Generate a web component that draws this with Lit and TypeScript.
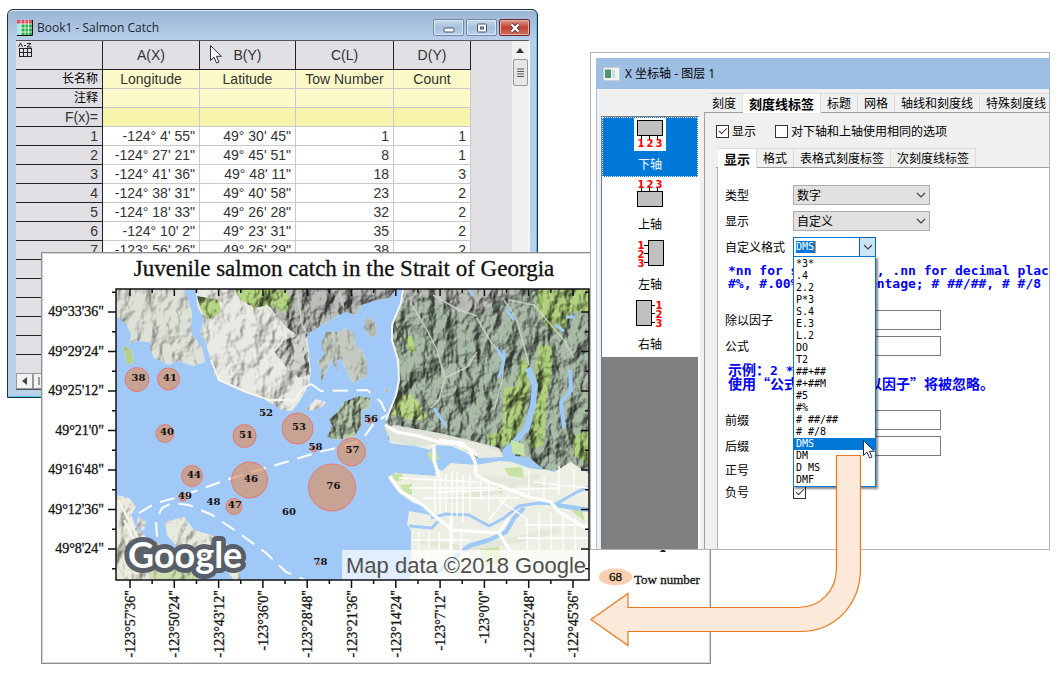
import { LitElement, html, svg, css } from "lit";
import { customElement, state } from "lit/decorators.js";
import { classMap } from "lit/directives/class-map.js";

const CJK = css`"Noto Sans CJK SC", sans-serif`;

const pointer = (x: number, y: number) => svg`
  <path transform="translate(${x} ${y})" d="M.5 .5V15.5L4 12.2L6.6 18L9 17L6.4 11.3H11.4Z"
    fill="#fff" stroke="#2a2e48" stroke-width="1"></path>`;

/* ---------- worksheet ---------- */

const ROWS = [
  ["-124° 4' 55\"", "49° 30' 45\"", "1", "1"],
  ["-124° 27' 21\"", "49° 45' 51\"", "8", "1"],
  ["-124° 41' 36\"", "49° 48' 11\"", "18", "3"],
  ["-124° 38' 31\"", "49° 40' 58\"", "23", "2"],
  ["-124° 18' 33\"", "49° 26' 28\"", "32", "2"],
  ["-124° 10' 2\"", "49° 23' 31\"", "35", "2"],
  ["-123° 56' 26\"", "49° 26' 29\"", "38", "2"],
];

@customElement("sheet-window")
class SheetWindow extends LitElement {
  static styles = css`
    :host { display: flex; flex-direction: column; box-sizing: border-box; height: 389px;
      border: 1px solid #25323c; border-radius: 6px 6px 0 0; overflow: hidden;
      padding: 0 7px 7px 8px; font: 14px/18px "Liberation Sans", ${CJK}; color: #333;
      background: linear-gradient(#9ab5d3, #b7cfe9 30px, #b9d1ea);
      box-shadow: inset -1px 0 #49c4ec, inset 0 -1px #49c4ec, inset 0 1px #dce9f5; }
    .title { display: flex; align-items: center; gap: 4px; height: 30px; flex: none; }
    .title h2 { flex: 1; margin: 0; padding-top: 5px; font: 12px/16px "Open Sans", sans-serif; color: #1b2733; }
    .title button { width: 31px; height: 17px; margin: 5px 0 0 -2px; padding: 0; border: 1px solid #6f88a5;
      border-radius: 2px; background: linear-gradient(#c9dbee, #a4c0de 50%, #b9d2ea);
      box-shadow: inset 0 0 0 1px #dbe8f5; display: grid; place-items: center; }
    .title .close { background: linear-gradient(#dc9b8f, #bf4330 50%, #d2705c); border-color: #6b2a2a; box-shadow: inset 0 0 0 1px #e6b0a6; }
    .title .icon { margin-top: 4px; }
    .title .min { padding-top: 4px; }
    .body { display: flex; flex: 1; min-height: 0; overflow: hidden; background: #e0dfe4;
      border-top: 1px solid #555; border-right: 2px solid #f6f6f6; }
    .grid { flex: 1; display: flex; flex-direction: column; overflow: hidden; }
    .cells { flex: 1; min-height: 0; overflow: hidden; }
    table { border-collapse: separate; border-spacing: 0; table-layout: fixed; width: 455px; }
    th, td { box-sizing: border-box; height: 19px; padding: 0; overflow: hidden; white-space: nowrap;
      font-weight: 400; line-height: 18px; border-right: 1px solid #c9c9cf; border-bottom: 1px solid #c9c9cf; }
    thead th { height: 29px; background: #e0dfe4; border-color: #222; }
    .corner { text-align: left; vertical-align: top; }
    .corner svg { display: block; margin: 1px 0 0 2px; }
    .side { background: #e0dfe4; text-align: right; padding-right: 4px; border-color: #222; }
    .side.cn { font-size: 12px; color: #000; }
    .note { background: #fbfac8; text-align: center; }
    td { background: #fff; text-align: right; padding-right: 4px; }
    td.note, td.formula { padding: 0; }
    td.note { background: #fbfac8; text-align: center; }
    td.formula { background: #f7f5ab; }
    .vbar { width: 16px; flex: none; background: #f0f0f2; display: flex; flex-direction: column; align-items: center; }
    .vbar button, .hbar button { border: 0; padding: 0; background: none; display: grid; place-items: center; }
    .vbar button { width: 16px; height: 18px; }
    .thumb { width: 13px; height: 25px; border: 1px solid #979797; border-radius: 2px; background: #e6e6e8; display: grid; place-items: center; }
    .hbar { height: 16px; flex: none; display: flex; border-bottom: 1px solid #555; background: #f0f0f2; }
    .hbar button { width: 17px; border: 1px solid #999; background: #f2f2f2; }
  `;
  render() {
    return html`
      <div class="title">
        <svg class="icon" width="17" height="17">
          <rect x="1" y="1" width="15" height="15" fill="#fff"></rect>
          <rect x="1" y="1" width="15" height="4" fill="#f0455a"></rect>
          <rect x="1" y="5" width="4" height="11" fill="#9fe3ee"></rect>
          <rect x="5" y="5" width="11" height="11" fill="#27b04c"></rect>
          <path d="M1 5H16M1 9H16M1 13H16M5 1V16M9 1V16M12.500 1V16" stroke="#d9f3dd"></path>
          <path d="M1 16.500H16.500V1" fill="none" stroke="#111"></path>
        </svg>
        <h2>Book1 - Salmon Catch</h2>
        <button class="min" aria-label="最小化"><svg width="12" height="6"><rect x="1" y="1" width="10" height="4" rx="1" fill="#fff" stroke="#4a5568"></rect></svg></button>
        <button aria-label="最大化"><svg width="12" height="10"><rect x="1.500" y="1" width="9" height="8" rx="1" fill="#fff" stroke="#4a5568"></rect><rect x="4.500" y="4" width="3" height="2" fill="#a9c3de" stroke="#4a5568"></rect></svg></button>
        <button class="close" aria-label="关闭"><svg width="12" height="10"><path d="M2.500 1.500L9.500 8.500M9.500 1.500L2.500 8.500" stroke="#4b3338" stroke-width="4"></path><path d="M2.500 1.500L9.500 8.500M9.500 1.500L2.500 8.500" stroke="#fff" stroke-width="2.400"></path></svg></button>
      </div>
      <div class="body">
        <div class="grid">
          <div class="cells">
            <table>
              <colgroup><col style="width:87px"><col style="width:97px"><col style="width:96px"><col style="width:98px"><col style="width:77px"></colgroup>
              <thead><tr>
                <th class="corner"><svg width="15" height="16" fill="none" stroke="#222"><path d="M.5 5L2.500 1L4.500 5M6 3.500H8M9 1.500H13L9 5H13.500"></path><rect x="1.500" y="6.500" width="12" height="8"></rect><path d="M1 10.500H14M5.500 6V15M9.500 6V15"></path></svg></th>
                <th>A(X)</th><th>B(Y)</th><th>C(L)</th><th>D(Y)</th>
              </tr></thead>
              <tbody>
                <tr><th class="side cn">长名称</th>${["Longitude", "Latitude", "Tow Number", "Count"].map((n) => html`<td class="note">${n}</td>`)}</tr>
                <tr><th class="side cn">注释</th>${[0, 1, 2, 3].map(() => html`<td class="note"></td>`)}</tr>
                <tr><th class="side">F(x)=</th>${[0, 1, 2, 3].map(() => html`<td class="formula"></td>`)}</tr>
                ${ROWS.map((r, i) => html`<tr><th class="side">${i + 1}</th>${r.map((c) => html`<td>${c}</td>`)}</tr>`)}
                ${[0, 1, 2, 3, 4, 5].map(() => html`<tr><th class="side"></th><td></td><td></td><td></td><td></td></tr>`)}
              </tbody>
            </table>
          </div>
          <div class="hbar">
            <button aria-label="向左滚动"><svg width="6" height="8"><path d="M5 0V8L0 4Z" fill="#444"></path></svg></button>
            <button aria-label="第一张"><svg width="8" height="8"><path d="M1 0V8M7 0V8L3 4Z" fill="#444" stroke="#444"></path></svg></button>
          </div>
        </div>
        <div class="vbar">
          <button aria-label="向上滚动"><svg width="8" height="5"><path d="M0 5H8L4 0Z" fill="#333"></path></svg></button>
          <div class="thumb"><svg width="7" height="9"><path d="M0 1H7M0 3.500H7M0 6H7M0 8.500H7" stroke="#555"></path></svg></div>
        </div>
      </div>`;
  }
}

/* ---------- map graph ---------- */

const LAT = ["49°33'36\"", "49°29'24\"", "49°25'12\"", "49°21'0\"", "49°16'48\"", "49°12'36\"", "49°8'24\""];
const LON = ["-123°57'36\"", "-123°50'24\"", "-123°43'12\"", "-123°36'0\"", "-123°28'48\"", "-123°21'36\"",
  "-123°14'24\"", "-123°7'12\"", "-123°0'0\"", "-122°52'48\"", "-122°45'36\""];
const latY = (i: number) => 312 + i * 39.5;
const lonX = (i: number) => 131 + i * 44.3;

// tow number, label centre, bubble centre, bubble radius
const TOWS: [string, number, number, number, number, number][] = [
  ["38", 139.5, 377, 138, 379.5, 12], ["41", 171, 377, 169.5, 379, 11], ["40", 168, 431, 166, 433.5, 9],
  ["51", 247, 434, 245.5, 436, 11.5], ["53", 300, 426, 298.5, 428.5, 15.5], ["52", 267, 412, 266, 414, 1],
  ["56", 372, 418, 371, 420, 3], ["58", 316.5, 446, 315, 449, 3], ["57", 353.5, 449, 352.5, 452, 14],
  ["44", 195, 474, 193, 476, 10.5], ["46", 252, 478, 250.5, 480, 18], ["49", 186, 495, 184, 497, 4],
  ["48", 214.5, 501, 213, 503, 0], ["47", 236, 504, 235, 506.5, 8], ["60", 290, 511, 289, 513, 0],
  ["76", 334.5, 485, 333, 487.5, 23.5], ["78", 321.5, 561, 320, 564, 1],
];

@customElement("map-graph")
class MapGraph extends LitElement {
  static styles = css`
    :host { display: block; box-sizing: border-box; height: 412px; background: #fff;
      border: 1px solid #8e8e8e; box-shadow: inset 0 0 0 1px #d6d6d6; }
    svg { display: block; }
    text { font-family: "Liberation Serif", serif; fill: #111; }
    .heading { font-size: 23px; text-anchor: middle; stroke: #111; stroke-width: 0.3; }
    .axis { font-size: 14px; stroke: #111; stroke-width: 0.3; }
    .legend { font-size: 13px; stroke: #111; stroke-width: 0.3; }
    .tow { font: bold 10px "DejaVu Serif", serif; text-anchor: middle; }
    .credit { font: 22px "Liberation Sans", sans-serif; fill: #505050; }
    .logo { font: bold 36px Lato, sans-serif; }
    .halo { fill: #4f5661; stroke: #4f5661; stroke-width: 10; stroke-linejoin: round; }
    .halo, .logo { opacity: 0.92; }
    .logo.face { fill: #fff; opacity: 1; }
  `;
  terrain() {
    return svg`
      <rect x="117" y="289" width="473" height="291" fill="#a0c9f7"></rect>
      <g filter="url(#soft)" fill="#eef0e8">
        <path d="M117 289H185L193 312L192 332L203 348L206 362L194 366L178 361L170 365L155 358L151 349V342L140 341L130 344L132 335L128 325L117 316Z" fill="#e2e6dc"></path>
        <path d="M197 289H300L308 335L312 372L310 385L300 402L293 411L283 410L270 402L247 392L233 384L220 381L216 376L211 358L206 340L201 333L205 320L198 305Z"></path>
        <path d="M124 345L133 350L135 362L128 366L125 352Z" fill="#b9d48f"></path>
        <path d="M117 495L130 498L137 507L132 515L137 527L150 540L175 548L190 560L200 580H117Z" fill="#f2f1e4"></path>
        <path d="M166 522L185 517L195 530L222 538L238 555L242 580H235L222 563L200 558L178 547L168 535Z" fill="#edf1e2"></path>
        <path d="M139 516L147 522L145 532L138 526ZM307 409L317 399L327 402L323 407L310 411Z"></path>
        <path d="M327 332L343 331L346 328L355 333L357 345L364 352L368 362L368 377L360 380L353 383L350 376L348 372L344 364L341 358L338 362L338 372L333 360L330 366L325 378L322 383L322 368L318 362L325 355L322 343Z" fill="#c9d0c6"></path>
        <path d="M368 317L376 322L378 335L372 338L365 328ZM386 388L390 390L388 393L385 391Z" fill="#b8beb5"></path>
        <path d="M150 580V545L185 556L200 580Z" fill="#d2e3b4"></path>
      </g>
      <g filter="url(#relief)">
        <path d="M250 289H397L390 298L374 301L363 305L357 315L347 312L340 315L320 327L310 333L304 342L296 334L284 324L272 308L262 300Z" fill="#bfc3bd"></path>
        <path d="M285 340L305 334L309 352L311 375L300 378L286 366L276 352Z" fill="#d5d9d1"></path>
        <path d="M236 289H284L294 300L287 313L270 305L255 308L240 299Z" fill="#bbdd85"></path>
        <path d="M198 296L220 300L222 312L209 320L201 308Z" fill="#bbdd85"></path>
        <path d="M404 289L403 302L393 325L392 338L397 355L400 378L397 395L388 418L385 427L390 440L418 446L440 445L462 447L478 458L500 457L513 460L545 470L590 470V289Z" fill="#aec0ac"></path>
        <path d="M404 289L403 302L410 305L430 296L455 312L480 315L495 303L520 300V289Z" fill="#bfc4bc"></path>
        <path d="M345 402L360 396L372 398L370 408L362 412L363 425L355 437L337 440L328 437L333 425L330 420L338 412Z" fill="#bcd0b0"></path>
        <path d="M400 396L413 394L430 418L415 421L392 414L397 400Z" fill="#bfdc8c"></path>
        <path d="M404 337L413 336L417 352L411 353Z" fill="#bbdd85"></path>
        <path d="M522 357L529 364L530 390L524 420L512 445L490 446L488 436L503 430L505 388L517 386Z" fill="#b4d680"></path>
        <path d="M540 345L554 346L553 372L548 398L545 445L530 450V430L537 400L536 370Z" fill="#b4d680"></path>
        <path d="M537 289H590V312L572 312L566 330L555 333L545 324L538 305Z" fill="#b4d680"></path>
        <path d="M572 436L590 431V464L575 455Z" fill="#b4d680"></path>
      </g>
      <g fill="none" stroke="#d2d8cf" stroke-width="1.600" opacity=".8">
        <path d="M298 290L303 325L309 334M412 304L428 330L438 350L446 378L468 367L478 352M446 378L440 400L432 408M505 300L517 318L526 350L530 365M478 318L492 342L505 358L503 382L495 410M510 300L535 305L552 325L565 340L575 358M434 295L460 310L478 316M268 308L285 328M340 291L345 308"></path>
      </g>
      <g fill="none" stroke="#9fcaf8" stroke-linejoin="round">
        <path d="M505 350V360L500 378M507 309L515 320M497 347L504 359" stroke-width="3"></path>
        <path d="M529 368L536 385L534 405L528 428L514 444L505 452" stroke-width="6"></path>
        <path d="M571 370L572 390L562 403L565 428" stroke-width="4"></path>
        <path d="M435 408L447 426" stroke-width="3"></path>
        <path d="M470 289L474 296M556 325L565 331M567 317H575" stroke-width="3"></path>
      </g>
      <path d="M390 438L415 435L440 442L462 447L478 458L500 457L520 462L555 472L572 462L590 474V580H412V530L408 525L410 511L432 515L420 507L400 493L389 478L397 472L435 475L437 470L428 458L433 452L420 448L391 443Z" fill="#eeefe4"></path>
      <path d="M395 425L440 433L478 442L500 448L505 457H478L462 447L440 443L418 447L391 441L386 428Z" fill="#dfe3da"></path>
      <path d="M386 443L415 446L432 450L434 445L452 446L466 452L475 458L500 457L508 447L520 444L516 456L530 457L545 470L530 468L513 462L500 461L477 465L452 463L443 471L434 466L437 476L398 473L384 460Z" fill="#a0c9f7"></path>
      <path d="M458 440L478 443L502 452L504 457L480 458L470 451Z" fill="#e9ebe0"></path>
      <g fill="#c7e2a3">
        <path d="M428 454L436 448L440 458L434 464ZM505 468L523 467L525 478L510 476ZM495 482L506 488L502 494L497 490ZM401 485L413 484V495L405 493ZM572 510L583 509L586 522ZM512 440L525 444L526 456L513 453ZM392 474L403 473L404 480L394 482ZM480 548L500 547L503 562L485 566Z"></path>
      </g>
      <g fill="none" stroke="#dfe1d4" stroke-width="6" opacity=".6"><path d="M450 500L500 490L540 475M420 540L470 550L560 530M480 478L550 485"></path></g>
      <g fill="none" stroke="#9fcaf8" stroke-width="3" stroke-linejoin="round">
        <path d="M432 518L447 514L470 515L490 526L505 518L520 506L540 503L557 504L578 492L590 487M400 500L425 508L436 518M410 526L433 528L440 520"></path>
        <path d="M436 574L470 546L490 540L507 532L515 518L525 508M557 505L590 510" stroke-width="4.500"></path>
      </g>
      <g fill="none" stroke="#fff" stroke-width="1.300">
        <path d="M436 478V512M441 476V514M447 474V512M453 472V518M458 472V516M464 474V522M471 474V512M482 478V500M490 480V512M400 478L480 482M410 488H500M424 498H520M438 492L560 488M412 540H470M414 552H466M420 531V580M430 531V580M440 532V580M462 528V580M528 520V550M540 512V550M552 512V550M564 514V550M576 518V550M525 525H590M518 538H590M530 470V500M545 476V500M560 466V495M575 470V490M535 482L590 488M500 500L530 520M510 495L490 520"></path>
      </g>
      <g fill="none" stroke="#fff" stroke-width="3.200" stroke-linejoin="round">
        <path d="M386 425L398 432L420 436L440 442L458 444L470 449L476 462L477 475L490 482L512 490L530 497L552 502L560 512L590 530M440 440L462 443L478 455M452 516V560M436 516L453 530L500 533L510 518M500 533L512 552M435 445V460L440 476M391 476L400 490L425 506L440 520"></path>
      </g>
      <g fill="none" stroke="#f5f5f0" stroke-width="2">
        <path d="M404 290L402 303L393 325L393 340L399 360L400 380L397 395L387 420M212 360L220 380L247 392L270 400L296 400L304 388L312 384M119 500L135 530L150 560M125 520L140 550"></path>
      </g>
      <g fill="none" stroke="#fff" stroke-width="2" stroke-dasharray="15 9">
        <path d="M140 513L157 503L180 497L227 480L253 472L287 462L320 452L345 446L363 440L375 423L388 415"></path>
        <path d="M312 384L322 391L368 390L382 402L388 415"></path>
        <path d="M158 537L157 520L163 508L173 503L190 505L213 515L240 533L267 553L287 572L306 580"></path>
      </g>`;
  }
  render() {
    const ticks = svg`
      ${LAT.map((_, i) => svg`<path d="M109 ${latY(i)}H117M582 ${latY(i)}H590M113 ${latY(i) + 19.75}H117M586 ${latY(i) + 19.75}H590"></path>`)}
      <path d="M113 292.250H117M586 292.250H590"></path>
      ${LON.map((_, i) => svg`<path d="M${lonX(i)} 580V588M${lonX(i)} 289V296"></path>`)}
      ${LON.slice(1).map((_, i) => svg`<path d="M${lonX(i) + 22.15} 580V584M${lonX(i) + 22.15} 289V293"></path>`)}`;
    return html`
      <svg width="668" height="410" viewBox="43 253 668 410" role="img" aria-label="Juvenile salmon catch in the Strait of Georgia">
        <defs>
          <filter id="relief" x="0" y="0" width="1" height="1" color-interpolation-filters="sRGB">
            <feTurbulence type="fractalNoise" baseFrequency=".06 .04" numOctaves="4" seed="7"></feTurbulence>
            <feDiffuseLighting surfaceScale="10" diffuseConstant="1.100" lighting-color="#fff"><feDistantLight azimuth="215" elevation="50"></feDistantLight></feDiffuseLighting>
            <feComponentTransfer result="lit">
              <feFuncR type="linear" slope=".68" intercept=".3"></feFuncR>
              <feFuncG type="linear" slope=".68" intercept=".3"></feFuncG>
              <feFuncB type="linear" slope=".68" intercept=".3"></feFuncB>
            </feComponentTransfer>
            <feBlend in="SourceGraphic" in2="lit" mode="multiply"></feBlend>
            <feComposite in2="SourceAlpha" operator="in"></feComposite>
          </filter>
          <filter id="soft" x="0" y="0" width="1" height="1" color-interpolation-filters="sRGB">
            <feTurbulence type="fractalNoise" baseFrequency=".04 .03" numOctaves="4" seed="3"></feTurbulence>
            <feDiffuseLighting surfaceScale="6" diffuseConstant="1.200" lighting-color="#fff"><feDistantLight azimuth="215" elevation="55"></feDistantLight></feDiffuseLighting>
            <feComponentTransfer result="lit">
              <feFuncR type="linear" slope=".75" intercept=".23"></feFuncR>
              <feFuncG type="linear" slope=".75" intercept=".23"></feFuncG>
              <feFuncB type="linear" slope=".75" intercept=".23"></feFuncB>
            </feComponentTransfer>
            <feBlend in="SourceGraphic" in2="lit" mode="multiply"></feBlend>
            <feComposite in2="SourceAlpha" operator="in"></feComposite>
          </filter>
          <clipPath id="plot"><rect x="117" y="289" width="473" height="291"></rect></clipPath>
        </defs>
        <text class="heading" x="345" y="276">Juvenile salmon catch in the Strait of Georgia</text>
        <g clip-path="url(#plot)">
          ${this.terrain()}
          <rect x="343" y="550" width="247" height="30" fill="#fff" opacity=".68"></rect>
          <text class="credit" x="347" y="573">Map data ©2018 Google</text>
          <text class="logo halo" x="129" y="568">Google</text>
          <text class="logo face" x="129" y="568">Google</text>
          ${TOWS.map(([, , , x, y, r]) => r ? svg`<circle cx=${x} cy=${y} r=${r} fill="#db8f62" fill-opacity=".68" stroke="#ee6f69" stroke-opacity=".9"></circle>` : "")}
        </g>
        ${TOWS.map(([n, x, y]) => svg`<text class="tow" x=${x} y=${y + 4}>${n}</text>`)}
        <g stroke="#111" stroke-width="1.500" fill="none"><rect x="117" y="289" width="473" height="291"></rect>${ticks}</g>
        ${LAT.map((t, i) => svg`<text class="axis" text-anchor="end" x="105" y=${latY(i) + 4}>${t}</text>`)}
        ${LON.map((t, i) => svg`<text class="axis" text-anchor="end" transform="translate(${lonX(i) + 5} 590) rotate(-90)">${t}</text>`)}
        <path d="M661 552L664 548L667 552Z" fill="#222"></path>
        <ellipse cx="616.500" cy="577" rx="16.500" ry="8.500" fill="#f9cfb0"></ellipse>
        <text class="legend" x="610" y="581">68</text>
        <text class="legend" x="635" y="584">Tow number</text>
      </svg>`;
  }
}

/* ---------- axis dialog ---------- */

const FORMATS = ["*3*", ".4", "2.2", "P*3", "S.4", "E.3", "L.2", "DO", "T2", "##+##", "#+##M", "#5", "#%",
  "# ##/##", "# #/8", "DMS", "DM", "D MS", "DMF"];

const chevron = svg`<path d="M1 1L5 5L9 1" fill="none" stroke="#444" stroke-width="1.200"></path>`;

@customElement("axis-dialog")
class AxisDialog extends LitElement {
  @state() private axis = 0;
  @state() private format = "DMS";

  static styles = css`
    :host { display: flex; flex-direction: column; box-sizing: border-box; height: 498px; overflow: hidden;
      border: 1px solid #b4b4b4; padding: 5px 0 0 5px; background: #fff; color: #000;
      font: 12px/16px ${CJK}; text-spacing-trim: space-all; }
    .title { display: flex; align-items: center; gap: 5px; height: 31px; flex: none; padding-left: 7px; background: #9dbfe3; }
    .title h2 { margin: 0; font: 12px/18px "Open Sans", ${CJK}; }
    .main { flex: 1; min-height: 0; display: flex; background: #f0f0f0; border-left: 1px solid #a9c4e0; }
    .axes { width: 96px; flex: none; margin: 27px 4px 0; border-left: 1px solid #777; border-top: 1px solid #777; border-right: 2px solid #fff; background: #808080; }
    .axes button { display: flex; flex-direction: column; align-items: center; width: 96px; height: 60px; box-sizing: border-box;
      margin: 0; padding: 0; border: 1px solid #fff; background: #fff; font: inherit; color: #000; gap: 5px; }
    .axes button.on { background: #0078d7; color: #fff; border: 1px dotted #fff; }
    .axes svg { display: block; }
    .axes text { font: bold 10px "DejaVu Sans", sans-serif; fill: #f00; text-anchor: middle; }
    .pages { flex: 1; min-width: 0; display: flex; flex-direction: column; padding-top: 4px; }
    .tabs { display: flex; align-items: flex-end; flex: none; height: 20px; padding-left: 2px; white-space: nowrap; overflow: hidden; box-shadow: inset 0 -1px #a0a0a0; }
    .tabs button { flex: none; height: 19px; padding: 0 6px; border: 1px solid #dcdcdc; border-width: 1px 1px 0 0; background: #f0f0f0; font: inherit; line-height: 16px; margin: 0 0 1px; color: #000; }
    .tabs button.on { height: 20px; margin: 0; font-size: 13px; font-weight: 700; background: #fff; }
    .page { flex: 1; min-height: 0; border-left: 1px solid #a0a0a0; padding: 10px 0 0 11px; display: flex; flex-direction: column; }
    .checks { display: flex; gap: 19px; height: 16px; flex: none; }
    .checks label { display: flex; align-items: center; gap: 3px; white-space: nowrap; }
    input[type="checkbox"] { appearance: none; width: 13px; height: 13px; margin: 0; border: 1px solid #333; background: #fff; flex: none; display: grid; place-items: center; }
    input[type="checkbox"]:checked::before { content: ""; width: 7px; height: 3px; border: solid #333; border-width: 0 0 1px 1px; transform: rotate(-45deg); margin-bottom: 3px; }
    .inner { margin-top: 9px; }
    .form { flex: 1; background: #fff; border-left: 1px solid #b0b0b0; padding: 14px 0 0 7px; margin-left: 1px; }
    .row { display: grid; grid-template-columns: 68px 148px; align-items: center; height: 26px; }
    .row.short { height: 22px; }
    .drop { display: grid; width: 137px; align-items: center; }
    .drop select, .drop svg { grid-area: 1 / 1; }
    .drop svg { justify-self: end; margin-right: 4px; pointer-events: none; }
    select { appearance: none; box-sizing: border-box; width: 100%; height: 20px; padding: 0 3px; border: 1px solid #adadad; border-radius: 0; background: #e1e1e1; font: inherit; color: #000; }
    .row input:not([type]) { box-sizing: border-box; height: 20px; width: 148px; border: 1px solid #7a7a7a; padding: 0 3px; background: #fff; }
    .combo { position: relative; display: flex; width: 83px; box-sizing: border-box; height: 20px; border: 1px solid #0078d7; background: #fff; }
    .combo .field { flex: 1; min-width: 0; padding: 3px 2px; display: flex; }
    .combo .field input:not([type]) { width: 20px; height: 12px; border: 0; border-right: 1px solid #ff8c28; padding: 0; color: #fff; background: #0078d7; font: 10px/12px "DejaVu Sans Mono", monospace; }
    .combo > button { width: 17px; height: 20px; margin: -1px; padding: 0; border: 1px solid #0063b1; background: #cce4f7; display: grid; place-items: center; }
    .list { position: absolute; z-index: 2; top: 18px; left: -1px; width: 83px; box-sizing: border-box; margin: 0; padding: 1px 0 0; list-style: none;
      border: 1px solid #0078d7; background: #fff; box-shadow: 2px 2px 2px #0007; font: 10px/12px "DejaVu Sans Mono", monospace; }
    .list li { height: 12px; padding-left: 2px; white-space: pre; }
    .list li.on { background: #0078d7; color: #fff; }
    .hint { margin: 4px 0 17px 3px; font: bold 13px/13px "DejaVu Sans Mono", monospace; color: #00f; white-space: nowrap; }
    .hint.cn { font: bold 14px/13px ${CJK}; }
    .hint code { font: bold 13px/13px "DejaVu Sans Mono", monospace; }
  `;

  axisIcon(i: number) {
    const nums = [1, 2, 3];
    const box = [[8, 3, 25, 15], [8, 14, 25, 15], [19, 3, 15, 25], [7, 3, 15, 25]][i];
    const lines = ["M12.500 18V22M20.500 18V22M28.500 18V22", "M12.500 10V14M20.500 10V14M28.500 10V14",
      "M15 7.500H19M15 15.500H19M15 24.500H19", "M22 7.500H26M22 15.500H26M22 24.500H26"][i];
    const pos = (n: number) => [[12 + n * 9, 29], [12 + n * 9, 10], [12, 11 + n * 9], [30, 11 + n * 9]][i];
    return html`<svg width="42" height="33">
      ${i === 0 ? svg`<rect x="5" width="32" height="33" fill="#fff"></rect>` : ""}
      <rect x=${box[0] + 0.5} y=${box[1] - 0.5} width=${box[2]} height=${box[3]} fill="#c0c0c0" stroke="#000"></rect>
      <path d=${lines} stroke="#000"></path>
      ${nums.map((v, n) => svg`<text x=${pos(n)[0]} y=${pos(n)[1]}>${v}</text>`)}
    </svg>`;
  }

  drop(id: string, label: string, value: string) {
    return html`<div class="row"><label for=${id}>${label}</label>
      <span class="drop"><select id=${id}><option>${value}</option></select><svg width="10" height="7">${chevron}</svg></span></div>`;
  }

  field(id: string, label: string) {
    return html`<div class="row"><label for=${id}>${label}</label><input id=${id}></div>`;
  }

  tabs(names: string[], on: number) {
    return names.map((n, i) => html`<button role="tab" aria-selected=${i === on} class=${classMap({ on: i === on })}>${n}</button>`);
  }

  render() {
    return html`
      <div class="title">
        <svg width="17" height="14"><rect x=".5" y=".5" width="16" height="13" fill="#f4f4f0" stroke="#c5ccd0"></rect><path d="M2 2.500H8V11H2Z" fill="#4c9273"></path><path d="M9 3H12V11H9Z" fill="#c9dde8"></path></svg>
        <h2>X 坐标轴 - 图层 1</h2>
      </div>
      <div class="main">
        <div class="axes">
          ${["下轴", "上轴", "左轴", "右轴"].map((n, i) => html`
            <button class=${classMap({ on: i === this.axis })} @click=${() => (this.axis = i)}>${this.axisIcon(i)}<span>${n}</span></button>`)}
        </div>
        <div class="pages">
          <div class="tabs" role="tablist">${this.tabs(["刻度", "刻度线标签", "标题", "网格", "轴线和刻度线", "特殊刻度线"], 1)}</div>
          <div class="page">
            <div class="checks">
              <label><input type="checkbox" checked>显示</label>
              <label><input type="checkbox">对下轴和上轴使用相同的选项</label>
            </div>
            <div class="tabs inner" role="tablist">${this.tabs(["显示", "格式", "表格式刻度标签", "次刻度线标签"], 0)}</div>
            <div class="form">
              ${this.drop("type", "类型", "数字")}
              ${this.drop("show", "显示", "自定义")}
              <div class="row"><label for="fmt">自定义格式</label>
                <div class="combo">
                  <span class="field"><input id="fmt" .value=${this.format}></span>
                  <button aria-label="展开"><svg width="10" height="7">${chevron}</svg></button>
                  <ul class="list" role="listbox">${FORMATS.map((f) => html`
                    <li role="option" class=${classMap({ on: f === this.format })} @click=${() => (this.format = f)}>${f}</li>`)}</ul>
                </div>
              </div>
              <p class="hint">*nn for significant, .nn for decimal places<br>#%, #.00% for percentage; # ##/##, # #/8</p>
              ${this.field("div", "除以因子")}
              ${this.field("formula", "公式")}
              <p class="hint cn">示例：<code>2 * x</code><br>使用“公式”时，“除以因子”将被忽略。</p>
              ${this.field("prefix", "前缀")}
              ${this.field("suffix", "后缀")}
              <div class="row short"><label for="plus">正号</label><input id="plus" type="checkbox"></div>
              <div class="row short"><label for="minus">负号</label><input id="minus" type="checkbox" checked></div>
            </div>
          </div>
        </div>
      </div>`;
  }
}

/* ---------- scene ---------- */

@customElement("app-root")
class AppRoot extends LitElement {
  static styles = css`
    :host { display: block; position: relative; min-height: 680px; background: #fff; overflow: hidden; }
    sheet-window { position: absolute; left: 7px; top: 9px; width: 531px; }
    map-graph { position: absolute; left: 41px; top: 252px; width: 670px; }
    axis-dialog { position: absolute; left: 590px; right: 8px; top: 52px; min-width: 460px; isolation: isolate; }
    .marks { position: absolute; left: 0; top: 0; pointer-events: none; }
  `;
  render() {
    return html`
      <sheet-window></sheet-window>
      <map-graph></map-graph>
      <axis-dialog></axis-dialog>
      <svg class="marks" width="1058" height="680" aria-hidden="true">
        <path d="M836.500 455.500H860.500V568C860.500 605 835 631.500 800 631.500H628V645.500L591 619.500L628 593.500V607.500H798C820 607.500 836.500 591 836.500 568Z"
          fill="#fde9d9" stroke="#e9781c" stroke-width="1.200"></path>
        ${pointer(210, 45)}${pointer(863, 440)}
      </svg>`;
  }
}
